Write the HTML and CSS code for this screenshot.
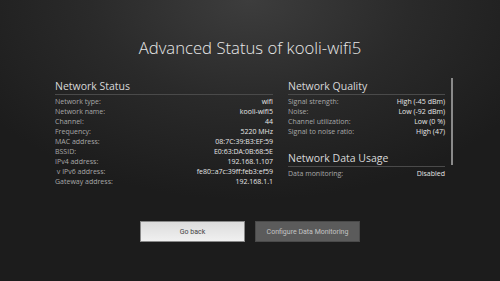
FILE: index.html
```html
<!DOCTYPE html>
<html lang="en">

<head>
    <meta charset="UTF-8">
    <meta name="viewport" content="width=device-width, initial-scale=1.0">
    <title>Advanced Status</title>
    <link rel="stylesheet" href="styles.css">
</head>

<body>
    <div class="screen">
        <h1 class="title">Advanced Status of kooli-wifi5</h1>

        <div class="panels">
            <div class="panel panel-left">
                <h2 class="section-title">Network Status</h2>
                <div class="row"><span class="label">Network type:</span><span class="value">wifi</span></div>
                <div class="row"><span class="label">Network name:</span><span class="value">kooli-wifi5</span></div>
                <div class="row"><span class="label">Channel:</span><span class="value">44</span></div>
                <div class="row"><span class="label">Frequency:</span><span class="value">5220 MHz</span></div>
                <div class="row"><span class="label">MAC address:</span><span class="value">08:7C:39:B3:EF:59</span></div>
                <div class="row"><span class="label">BSSID:</span><span class="value">E0:63:DA:0B:68:5E</span></div>
                <div class="row"><span class="label">IPv4 address:</span><span class="value">192.168.1.107</span></div>
                <div class="row"><span class="label">&nbsp;v IPv6 address:</span><span class="value">fe80::a7c:39ff:feb3:ef59</span></div>
                <div class="row"><span class="label">Gateway address:</span><span class="value">192.168.1.1</span></div>
            </div>

            <div class="panel panel-right">
                <h2 class="section-title">Network Quality</h2>
                <div class="row"><span class="label">Signal strength:</span><span class="value">High (-45 dBm)</span></div>
                <div class="row"><span class="label">Noise:</span><span class="value">Low (-92 dBm)</span></div>
                <div class="row"><span class="label">Channel utilization:</span><span class="value">Low (0 %)</span></div>
                <div class="row"><span class="label">Signal to noise ratio:</span><span class="value">High (47)</span></div>

                <h2 class="section-title section-gap">Network Data Usage</h2>
                <div class="row"><span class="label">Data monitoring:</span><span class="value">Disabled</span></div>
            </div>

            <div class="scrollbar"></div>
        </div>

        <div class="actions">
            <button class="btn btn-light">Go back</button>
            <button class="btn btn-dark">Configure Data Monitoring</button>
        </div>
    </div>
</body>

</html>
```

FILE: styles.css
```css
body {
    margin: 0;
    background: #1b1b1b;
    font-family: "Open Sans", sans-serif;
    color: #ddd;
}

.screen {
    height: 281px;
    overflow: hidden;
    background: radial-gradient(ellipse 320px 200px at 50% 0, #3d3d3d 0%, #2a2a2a 50%, #1c1c1c 100%);
}

.title {
    margin: 0;
    padding-top: 38px;
    text-align: center;
    font-size: 16.7px;
    font-weight: 300;
    line-height: 20px;
    color: #e8e8e8;
}

.panels {
    display: flex;
    margin-top: 22px;
    padding-left: 55px;
}

.panel-left {
    width: 218px;
}

.panel-right {
    width: 157px;
    margin-left: 15px;
}

.section-title {
    margin: 0 0 2px;
    padding-bottom: 1px;
    font-size: 10.5px;
    font-weight: 500;
    line-height: 13px;
    color: #d8d8d8;
    border-bottom: 1px solid #4a4a4a;
}

.section-gap {
    margin-top: 15px;
}

.row {
    display: flex;
    justify-content: space-between;
    font-size: 7px;
    line-height: 10px;
    white-space: pre;
}

.label {
    color: #a8a8a8;
}

.value {
    color: #e6e6e6;
}

.scrollbar {
    width: 2px;
    height: 87px;
    margin-left: 6px;
    margin-top: -2px;
    background: #8a8a8a;
}

.actions {
    display: flex;
    justify-content: center;
    gap: 10px;
    margin-top: 34px;
}

.btn {
    width: 105px;
    height: 21px;
    font-family: "Roboto", sans-serif;
    font-size: 7px;
    padding: 0;
    border-radius: 0;
}

.btn-light {
    background: linear-gradient(#dcdcdc, #f0f0f0);
    border: 1px solid #888;
    color: #444;
}

.btn-dark {
    background: #5b5b5b;
    border: 1px solid #4a4a4a;
    color: #c4c4c4;
}
```
